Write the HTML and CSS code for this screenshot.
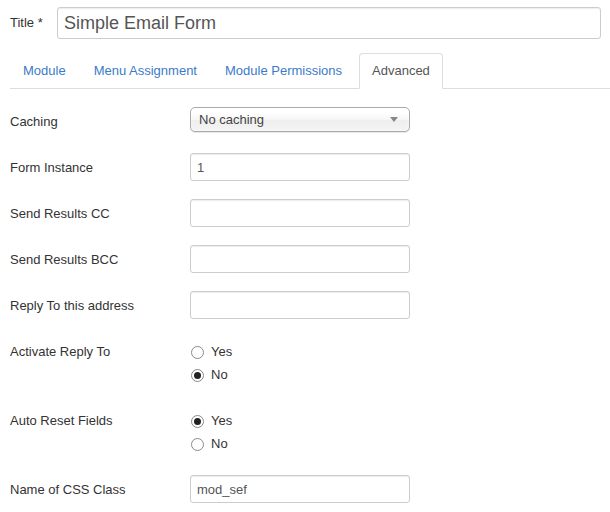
FILE: index.html
```html
<!DOCTYPE html>
<html>
<head>
<meta charset="utf-8">
<link rel="stylesheet" href="styles.css">
</head>
<body>
<div class="page">
  <div class="title-row">
    <label class="title-label">Title *</label>
    <input class="title-input" type="text" value="Simple Email Form">
  </div>
  <ul class="tabs">
    <li class="tab"><a>Module</a></li>
    <li class="tab"><a>Menu Assignment</a></li>
    <li class="tab"><a>Module Permissions</a></li>
    <li class="tab active"><a>Advanced</a></li>
  </ul>
  <div class="form">
    <div class="row">
      <div class="label">Caching</div>
      <div class="controls">
        <div class="select"><span>No caching</span><i class="arrow"></i></div>
      </div>
    </div>
    <div class="row">
      <div class="label">Form Instance</div>
      <div class="controls"><input class="text" type="text" value="1"></div>
    </div>
    <div class="row">
      <div class="label">Send Results CC</div>
      <div class="controls"><input class="text" type="text" value=""></div>
    </div>
    <div class="row">
      <div class="label">Send Results BCC</div>
      <div class="controls"><input class="text" type="text" value=""></div>
    </div>
    <div class="row">
      <div class="label">Reply To this address</div>
      <div class="controls"><input class="text" type="text" value=""></div>
    </div>
    <div class="row">
      <div class="label">Activate Reply To</div>
      <div class="controls radios">
        <div class="radio"><span class="dot"></span>Yes</div>
        <div class="radio"><span class="dot on"></span>No</div>
      </div>
    </div>
    <div class="row">
      <div class="label">Auto Reset Fields</div>
      <div class="controls radios">
        <div class="radio"><span class="dot on"></span>Yes</div>
        <div class="radio"><span class="dot"></span>No</div>
      </div>
    </div>
    <div class="row">
      <div class="label">Name of CSS Class</div>
      <div class="controls"><input class="text" type="text" value="mod_sef"></div>
    </div>
  </div>
</div>
</body>
</html>
```
FILE: styles.css
```css
* { box-sizing: border-box; }
html, body { margin: 0; padding: 0; background: #fff; }
body {
  font-family: "Liberation Sans", Arial, sans-serif;
  font-size: 13px;
  line-height: 18px;
  color: #333;
}
.page { padding: 7px 0 0 10px; }
.title-row {
  display: flex;
  align-items: center;
  padding-right: 9px;
}
.title-label { width: 47px; flex: none; font-size: 13px; }
.title-input {
  flex: 1;
  height: 32px;
  border: 1px solid #ccc;
  border-radius: 3px;
  padding: 4px 6px;
  font-family: "Liberation Sans", Arial, sans-serif;
  font-size: 18px;
  color: #555;
  box-shadow: inset 0 1px 1px rgba(0,0,0,0.075);
  outline: none;
}
.tabs {
  list-style: none;
  margin: 14px 0 18px;
  padding: 0;
  display: flex;
  border-bottom: 1px solid #ddd;
}
.tab { margin-bottom: -1px; margin-right: 2px; }
.tab a {
  display: block;
  padding: 8px 12px;
  line-height: 18px;
  border: 1px solid transparent;
  border-radius: 4px 4px 0 0;
  color: #3b7bc8;
}
.tab.active { margin-left: 2px; }
.tab.active a {
  color: #555;
  background: #fff;
  border-color: #ddd #ddd transparent;
}
.form { display: flex; flex-direction: column; gap: 18px; }
.row { display: flex; align-items: flex-start; min-height: 28px; }
.label { width: 180px; flex: none; padding-top: 6px; }
.controls { width: 220px; }
.text {
  width: 220px;
  height: 28px;
  border: 1px solid #ccc;
  border-radius: 3px;
  padding: 4px 6px;
  font-family: "Liberation Sans", Arial, sans-serif;
  font-size: 13px;
  color: #555;
  box-shadow: inset 0 1px 1px rgba(0,0,0,0.075);
  outline: none;
  display: block;
}
.select {
  width: 220px;
  height: 25px;
  border: 1px solid #aaa;
  border-radius: 5px;
  background: linear-gradient(#fff 20%, #f6f6f6 50%, #eee 52%, #f4f4f4);
  box-shadow: 0 0 3px #fff inset, 0 1px 1px rgba(0,0,0,0.1);
  display: flex;
  align-items: center;
  justify-content: space-between;
  padding: 0 11px 0 8px;
  color: #444;
  line-height: 23px;
}
.arrow {
  width: 0; height: 0;
  border-left: 4px solid transparent;
  border-right: 4px solid transparent;
  border-top: 5px solid #888;
}
.radios { padding: 6px 0 4px; display: flex; flex-direction: column; gap: 5px; }
.radio { display: flex; align-items: center; line-height: 18px; }
.dot {
  width: 13px; height: 13px;
  border: 1px solid #8a8a8a;
  border-radius: 50%;
  margin: 0 7px 0 1px;
  background: #fff;
  display: flex;
  align-items: center;
  justify-content: center;
}
.dot.on::after {
  content: "";
  width: 7px; height: 7px;
  border-radius: 50%;
  background: #222;
}
```
